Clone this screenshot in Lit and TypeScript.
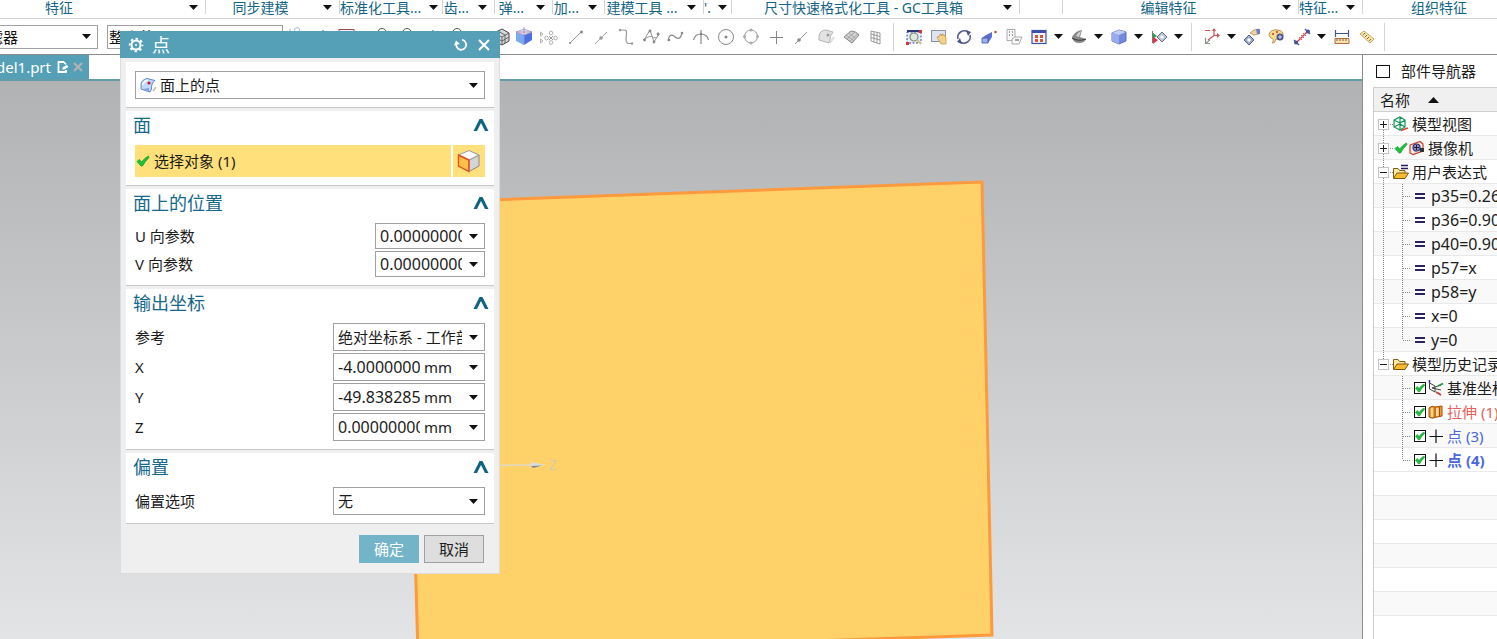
import { LitElement, html, css, svg, nothing } from "lit";
import { customElement } from "lit/decorators.js";

const FONT = css`"Noto Sans", "Noto Sans CJK SC", sans-serif`;

const caret = () => html`<svg class="caret" width="9" height="5" viewBox="0 0 9 5" aria-hidden="true"><path d="M0 0H9L4.5 5Z" fill="#111" /></svg>`;

/* 20 x 20 toolbar glyphs */
const G: Record<string, unknown> = {
  shape: svg`<circle cx="10" cy="3" r="2.5" fill="none" stroke="#a8c0d8"/><path d="M3 2V18M10 6V18M17 4V18" stroke="#9ab4cc"/>`,
  axis: svg`<path d="M4 16L11 3L16 16" fill="none" stroke="#5a9fc0"/>`,
  redbox: svg`<rect x="2" y="2.5" width="15" height="15" fill="#f6f6f6" stroke="#9a4a4a"/>`,
  knob: svg`<circle cx="10" cy="6" r="4.5" fill="none" stroke="#555"/><path d="M4 12h12" stroke="#555"/>`,
  greycube: svg`<path d="M2 6L10 2L17 6V14L10 18L2 14Z" fill="#d9d6de" stroke="#444"/><path d="M2 6L10 10L17 6M10 10V18M6 4L13 8V16M2 10L10 14L17 10" fill="none" stroke="#666"/>`,
  bluecube: svg`<path d="M2 5L10 8V18L2 14Z" fill="#7aaaf2"/><path d="M10 8L18 5V13L10 18Z" fill="#4d6fe0"/><path d="M2 5L10 2L18 5L10 8Z" fill="#dcecfb"/><path d="M2 5L10 2L18 5L10 8ZM10 8V18" fill="none" stroke="#8f9ad0" stroke-width=".8"/><path d="M10 0V9M2 5H18" stroke="#c77b9c" stroke-width=".8"/>`,
  pattern: svg`<g fill="none" stroke="#b0b0b0"><path d="M1.500 5V9L4 7ZM1.500 12V16L4 14Z"/><circle cx="12" cy="6" r="1.800"/><circle cx="12" cy="15.500" r="1.800"/><circle cx="7.500" cy="11" r="1.800"/><circle cx="16.500" cy="11" r="1.800"/></g><path d="M10 9l4 4M14 9l-4 4" stroke="#999"/>`,
  line: svg`<path d="M4 16L15 5" stroke="#999"/><circle cx="4" cy="16" r="1" fill="#888"/><circle cx="15.500" cy="5" r="1.500" fill="#888"/>`,
  linemid: svg`<path d="M4 17L16 5" stroke="#aaa"/><circle cx="10" cy="11" r="1.800" fill="#999"/>`,
  curve: svg`<path d="M4 3H8Q11 3 10.500 6L10 12Q10 16.500 13 16.500H17" fill="none" stroke="#999" stroke-width="1.200"/><circle cx="4" cy="3" r="1.200" fill="#999"/><circle cx="16" cy="16.500" r="1.200" fill="#999"/>`,
  zig: svg`<path d="M3 13L9 3L13 15L18 7M3 13Q9 7 13 11Q16 12 18 7" fill="none" stroke="#999"/><g fill="#888"><circle cx="3.500" cy="13" r="1.400"/><circle cx="9" cy="4" r="1.400"/><circle cx="13" cy="15" r="1.400"/><circle cx="17" cy="7" r="1.400"/></g>`,
  wave: svg`<path d="M2 14Q3 6 8 9Q14 15 16 6" fill="none" stroke="#888" stroke-width="1.200"/><circle cx="3" cy="13" r="1.300" fill="#888"/><circle cx="16" cy="6" r="1.300" fill="#888"/>`,
  arcplus: svg`<path d="M10 3V17M2.500 13Q4 7 10 7Q16 7 17.500 13" fill="none" stroke="#888" stroke-width="1.200"/><circle cx="10" cy="7" r="1.300" fill="#888"/>`,
  target: svg`<circle cx="10" cy="10" r="7.500" fill="none" stroke="#888"/><circle cx="10" cy="10" r="1.500" fill="#888"/>`,
  ring: svg`<circle cx="10" cy="9.500" r="6.500" fill="none" stroke="#999"/><g fill="#ababab"><circle cx="10" cy="3" r="1.500"/><circle cx="10" cy="16" r="1.500"/><circle cx="3.500" cy="9.500" r="1.500"/><circle cx="16.500" cy="9.500" r="1.500"/></g>`,
  plus: svg`<path d="M10.500 4V17M4 10.500H17" stroke="#888"/>`,
  linepick: svg`<path d="M4 17L16 5" stroke="#999"/><circle cx="8" cy="13" r="1.800" fill="#888"/>`,
  sheet: svg`<path d="M3 9Q4 3 10 3L17 5Q14 8 14 13L13 16L3 13Z" fill="#e2e2e2" stroke="#b4b4b4"/><circle cx="12" cy="8" r="1.500" fill="#999"/><path d="M14 16L18 10" stroke="#ddd" stroke-width="2"/>`,
  mesh: svg`<path d="M3 10L10 4Q15 4 18 8L11 16Z" fill="#d2d2d2" stroke="#888"/><path d="M5 8L13 14M8 6L15 12M6 12L14 5M9 14L17 7" stroke="#999" stroke-width=".8"/>`,
  grid: svg`<path d="M5 4L14 6V17L5 14ZM8 5V15M11 5.500V16M5 7L14 9.500M5 10.500L14 13" fill="none" stroke="#999"/>`,
  fit: svg`<path d="M3 5h14v11H3z" fill="#e9edf5" stroke="#3449a0" stroke-dasharray="2 1.500"/><path d="M3 4h14" stroke="#27387c" stroke-width="2"/><circle cx="10" cy="10" r="4" fill="#dce9dc" stroke="#808a80" stroke-width="1.200"/><path d="M13 13l4 4" stroke="#d8c080" stroke-width="2"/><path d="M2 15h3v3H2zM15 3h3v3h-3z" fill="#d33"/>`,
  pan: svg`<rect x="2.500" y="3.500" width="14" height="11" fill="#dfe4f1" stroke="#8c8fa8"/><path d="M8 10l3-1 0-2 1 0 1 2 0-2 1 0 1 2 1-1 1 3 0 6H12Z" fill="#f3d28e" stroke="#c29a50" stroke-width=".8"/>`,
  rotate: svg`<path d="M4 12A6.500 6.500 0 0 1 14 5M16 8A6.500 6.500 0 0 1 6 15" fill="none" stroke="#5a628c" stroke-width="1.600"/><path d="M12 3l5 2-3 4zM8 17l-5-2 3-4z" fill="#4c5480"/>`,
  extrude: svg`<path d="M3 11L7 8L13 5V10L9 16H3Z" fill="#5b6fd6"/><path d="M3 11H9V16H3Z" fill="#9fb2f0" stroke="#4052b0" stroke-width=".8"/><circle cx="16.500" cy="5" r="1.200" fill="#c33"/>`,
  sheets: svg`<g fill="#f8f8f8" stroke="#aaa"><path d="M3 2.500h8v11H3z"/><path d="M8 12l3-2h7l-3 7H8z"/></g><path d="M5 5h1M8 5h1M5 8h1M8 8h1M11 13h4" stroke="#888" stroke-width="1.500"/>`,
  layout: svg`<rect x="3" y="3.500" width="14" height="13" fill="#f4f4fb" stroke="#3c50a8" stroke-width="1.200"/><path d="M3 4.500h14" stroke="#3c50a8" stroke-width="3"/><path d="M6 8h3v3H6zM11 8h3v3h-3zM6 12h3v3H6zM11 12h3v3h-3z" fill="#d8553c"/>`,
  section: svg`<path d="M3 10Q6 4 13 3L11 10L17 12Q16 16 10 16Q4 16 3 10Z" fill="#8a8a8a"/><path d="M7 9Q8 6 12 4L10 10Z" fill="#d4d4d4"/><path d="M3 11Q9 15 17 12" fill="none" stroke="#333"/>`,
  solid: svg`<path d="M3 6L10 3L17 5V14L10 17L3 14Z" fill="#7488dc" stroke="#6070b4"/><path d="M3 6L10 8L17 5L10 3Z" fill="#c2cef6"/><path d="M3 6L10 8V17L3 14Z" fill="#9aacee"/>`,
  clip: svg`<path d="M3 5L8 9L4 12Z" fill="#2da44a"/><path d="M3.500 4V16" stroke="#777"/><path d="M4 10L9 13L4 17Z" fill="#d34"/><path d="M8 10L13 5L18 10L13 15Z" fill="#b9c2dc" stroke="#666f92"/><path d="M11 10L13 8L15 10L13 12Z" fill="#fff"/>`,
  csys: svg`<path d="M3 3.500h5M12 3V9M12 8.500H17M12 8.500L6 13" fill="none" stroke="#d65050" stroke-width="1.200"/><path d="M15 6l3 2.500-3 2.500zM10 4l2-3 2 3z" fill="#d65050"/><path d="M3.500 11V16.500H8M4 16L8 13" fill="none" stroke="#8a958a" stroke-width="1.200"/>`,
  hand1: svg`<path d="M2 13L7 8L12 13L7 18Z" fill="#9fabcf" stroke="#4c5a90"/><path d="M5 13L7 11L9 13L7 15Z" fill="#fff"/><path d="M8 6l4-3 5-1 0 5-5 1z" fill="#f0d3a0" stroke="#b38d58" stroke-width=".8"/><path d="M14 2h4v5h-3z" fill="#6f7fca"/>`,
  palette: svg`<path d="M2 7Q4 2 11 3Q17 4 16 9Q14 13 9 12Q8 17 5 16Q8 12 4 11Q2 10 2 7Z" fill="#f5dc8c" stroke="#b99a50"/><path d="M5 7h2M9 5h2" stroke="#d55" stroke-width="2"/><circle cx="13" cy="10" r="3.500" fill="#4a5596"/><path d="M11 10h4M13 8v4" stroke="#dde"/>`,
  measure: svg`<path d="M4 16L16 4" stroke="#c44" stroke-width="1.500"/><path d="M7 10l3 3M9 8l3 3M11 6l3 3" stroke="#d66"/><path d="M2 13l5 5M13 2l5 5" stroke="#44509a" stroke-width="1.300"/><circle cx="4" cy="15.500" r="2" fill="#44509a"/><circle cx="16" cy="4.500" r="2" fill="#44509a"/>`,
  ruler: svg`<path d="M3.500 3V10M16.500 3V10M4 6.500H16" stroke="#44509a" stroke-width="1.200"/><path d="M3 11.500h14v5H3z" fill="#f5e3a8" stroke="#b06a50"/><path d="M5 12v2M8 12v2M11 12v2M14 12v2" stroke="#8a5a40"/>`,
  tape: svg`<path d="M3 7L7 4L17 12L13 16Z" fill="#f5e3a8" stroke="#c8a868"/><path d="M6 8l2-2M8 10l2-2M10 12l2-2M12 14l2-2" stroke="#8a6a50"/>`,
};

const CHECK = svg`<path d="M2 8.500L4.500 6.500L6.500 9Q10 4.500 13.500 3L14 4.500Q10 8.500 7.500 13H6Z" fill="#1fc03a" stroke="#0f9a2c" stroke-width=".7"/>`;
const TICK = svg`<path d="M3.500 8L5.500 6.500L7 8.500Q9.500 5 12 4L12.500 5.500Q9.500 8.500 7.500 12H6.500Z" fill="#1fc03a" stroke="#0f9a2c" stroke-width=".6"/>`;

/* 16 x 16 tree glyphs */
const T: Record<string, unknown> = {
  views: svg`<path d="M1 4L7 1L12 4V11L7 14L1 11ZM1 4L7 7L12 4M7 7V14M1 11L7 8L12 11M7 1V8" fill="none" stroke="#12945a" stroke-width="1.200"/><path d="M8 14.500L15 12" stroke="#d9482e" stroke-width="1.800"/>`,
  check: CHECK,
  camera: svg`<path d="M1 5L11 1.500L14 4V11L4 14.500L1 13Z" fill="#f9e4e0" stroke="#c8402e" stroke-width="1.200"/><circle cx="7.500" cy="7.500" r="3.500" fill="#8c90d0" stroke="#2a2a70" stroke-width="1.200"/><path d="M5 7.500h5M7.500 5v5" stroke="#222"/><path d="M11 8v4h4V8" fill="#333"/>`,
  folderexpr: svg`<path d="M8 1.500h7M8 4.500h7" stroke="#241d63" stroke-width="1.500"/><path d="M.5 14V4.500H5L6.500 6.500H12V9" fill="#fbe9a0" stroke="#7a5a10"/><path d="M.5 14.500L4 9H15.500L12 14.500Z" fill="#fbb92c" stroke="#7a5a10"/>`,
  folder: svg`<path d="M.5 13V3.500H5L6.500 5.500H12V8" fill="#fbe9a0" stroke="#7a5a10"/><path d="M.5 13.500L4 8H15.500L12 13.500Z" fill="#fbb92c" stroke="#7a5a10"/>`,
  eq: svg`<path d="M3 6H13M3 10H13" stroke="#2c2260" stroke-width="2"/>`,
  datum: svg`<path d="M1.500 3V9L7 12V6ZM4 8L13 5M4 8L13 10" fill="none" stroke="#444"/><path d="M10 6L15 3.500" stroke="#1c9a40" stroke-width="1.800"/><path d="M8 12L13 15" stroke="#c33" stroke-width="1.800"/><path d="M1.500 0V3" stroke="#33b" stroke-width="1.500"/>`,
  extrusion: svg`<path d="M1 4Q4 1 7 3L14 2V12L7 13.500Q4 15 1 13Z" fill="#f79b2a" stroke="#a04c10"/><path d="M7 3V13M11.500 3V12" stroke="#a04c10"/><path d="M8 4h2.500v8H8zM3 4h2v9H3z" fill="#ffd9a0"/>`,
  point: svg`<path d="M8 1.500V15M1.500 8.500H15" stroke="#111" stroke-width="1.200"/>`,
};

const RIBBON: Array<[string, number, boolean]> = [
  ["特征", 269, true], ["同步建模", 134, true], ["标准化工具...", 103, true], ["齿...", 52, true],
  ["弹...", 58, true], ["加...", 52, true], ["建模工具 ...", 99, true], ["'.", 28, true],
  ["尺寸快速格式化工具 - GC工具箱", 288, true], ["", 43, false], ["编辑特征", 236, true],
  ["特征...", 64, true], ["组织特征", 152, false],
];

/* "v" is a drop-down arrow, "|" a separator, dashes are gaps */
const TOOLS = [
  "shape", "axis", "redbox", "-", "knob", "knob", "axis", "knob", "--", "greycube:s", "bluecube:s",
  "pattern:w", "line", "linemid", "curve", "zig", "wave", "arcplus", "target", "ring", "plus", "linepick",
  "sheet", "mesh", "grid", "|", "fit", "pan", "rotate", "extrude", "sheets", "layout", "v", "section", "v",
  "solid", "v", "clip", "v", "|", "csys", "v", "hand1", "palette", "measure", "v", "ruler", "tape", "|",
];

@customElement("nx-ribbon")
class NxRibbon extends LitElement {
  static styles = css`
    :host { display: block; overflow-x: clip; font: 14px/16px ${FONT}; background: #fff; }
    .labels { display: flex; height: 18px; margin-left: -63px; border-bottom: 1px solid #d4d4d4; }
    .group { flex: none; box-sizing: border-box; display: flex; height: 14px; border-right: 1px solid #d4d4d4; }
    .group:last-child { border: 0; }
    .name { flex: 1; text-align: center; color: #146585; white-space: nowrap; }
    .drop { flex: none; width: 24px; height: 14px; padding: 0; border: 0; background: none; }
    .caret { display: block; margin: 0 auto; }
    .tools { display: flex; align-items: center; height: 35px; border-bottom: 1px solid #8c8c8c; }
    .pick { flex: none; position: relative; display: flex; align-items: center; }
    select { appearance: none; box-sizing: border-box; height: 24px; border: 1px solid #a0a0a0; border-radius: 0;
      background: #fff; color: #111; font: 15px/20px ${FONT}; padding: 0 20px 0 4px; }
    .pick .caret { position: absolute; right: 7px; pointer-events: none; }
    .first { margin-left: -77px; }
    .first select { width: 175px; }
    .second { margin: 0 1px 0 9px; }
    .second select { width: 176px; padding-left: 1px; }
    .tool, .mini { flex: none; width: 25px; height: 24px; padding: 0; border: 0; background: none; display: grid; place-items: center; }
    .tool.s { width: 22px; }
    .tool.w { width: 28px; }
    .mini { width: 15px; }
    .sep { flex: none; width: 1px; height: 28px; margin: 0 7px 0 5px; background: #d4d4d4; }
    .gap { flex: none; width: 10px; }
    .biggap { flex: none; width: 22px; }
  `;
  tool(t: string) {
    if (t === "v") return html`<button class="mini" aria-label="更多">${caret()}</button>`;
    if (t === "|") return html`<span class="sep"></span>`;
    if (t === "-") return html`<span class="gap"></span>`;
    if (t === "--") return html`<span class="biggap"></span>`;
    const [name, size = ""] = t.split(":");
    return html`<button class="tool ${size}" aria-label=${name}><svg width="20" height="20" viewBox="0 0 20 20">${G[name]}</svg></button>`;
  }
  render() {
    return html`
      <div class="labels">
        ${RIBBON.map(([n, w, d]) => html`<div class="group" style="width:${w}px"><span class="name">${n}</span>${d ? html`<button class="drop" aria-label="展开">${caret()}</button>` : nothing}</div>`)}
      </div>
      <div class="tools">
        <span class="pick first"><select aria-label="过滤器"><option>无选择过滤器</option></select>${caret()}</span>
        <span class="pick second"><select aria-label="范围"><option>整个装配</option></select>${caret()}</span>
        ${TOOLS.map((t) => this.tool(t))}
      </div>`;
  }
}

@customElement("point-dialog")
class PointDialog extends LitElement {
  static styles = css`
    :host { display: block; box-sizing: border-box; background: #efefef; border: 1px solid #dcdcdc; border-top: 0; color: #1c1c1c; font: 15px/20px ${FONT}; }
    * { box-sizing: border-box; }
    header { display: flex; align-items: center; height: 27px; margin: 0 -1px; padding: 0 5px 0 8px; background: #559fb7; color: #fff; }
    h1 { flex: 1; margin: 0 0 0 8px; font-size: 18px; line-height: 24px; font-weight: 400; }
    header button { width: 23px; height: 22px; padding: 0; border: 0; background: none; display: grid; place-items: center; }
    .body { display: flex; flex-direction: column; gap: 3px; padding: 4px 5px 0; }
    section { padding: 0 9px 8px; background: #fff; border-bottom: 1px solid #c6c8ca; }
    section.type { padding-top: 9px; }
    .head { display: flex; align-items: center; justify-content: space-between; height: 34px; margin: 0 -4px 0 -2px; padding-bottom: 6px; }
    h2 { margin: 0; color: #14688a; font-size: 18px; line-height: 24px; font-weight: 400; }
    .head button { width: 16px; height: 16px; padding: 0; border: 0; background: none; display: grid; place-items: center; }
    .rows { display: flex; flex-direction: column; gap: 2px; }
    .row { display: flex; align-items: center; justify-content: space-between; }
    .combo { display: flex; align-items: center; width: 152px; height: 28px; padding-left: 4px; border: 1px solid #a0a0a0; background: #fff; }
    .combo.wide { width: 100%; }
    .combo.short { width: 110px; height: 26px; }
    .combo input, .combo select { flex: 1; min-width: 0; width: 0; height: 22px; padding: 0; border: 0; background: none; color: #1c1c1c; font: 15px/20px ${FONT}; }
    .combo input { font-size: 16px; }
    .combo select { appearance: none; overflow: hidden; text-overflow: clip; }
    .unit { width: 42px; padding-left: 4px; }
    .combo button { flex: none; width: 22px; height: 22px; padding: 0; border: 0; background: none; display: grid; place-items: center; }
    .glyph { flex: none; margin-right: 3px; }
    .pick { display: flex; gap: 2px; }
    .pick button { height: 32px; padding: 0; border: 0; background: #ffe07a; color: #1c1c1c; font: 15px/20px ${FONT}; }
    .target { flex: 1; display: flex; align-items: center; }
    .pick .face { width: 32px; display: grid; place-items: center; }
    footer { display: flex; justify-content: flex-end; gap: 5px; padding: 11px 15px 10px; }
    footer button { width: 60px; height: 28px; padding: 0; border: 1px solid #a0a0a0; background: #dedede; color: #1c1c1c; font: 15px/20px ${FONT}; }
    footer .ok { border-color: #73b4c9; background: #73b4c9; color: #fff; }
  `;
  head(t: string) {
    return html`<div class="head"><h2>${t}</h2><button aria-label="折叠${t}"><svg width="16" height="12" viewBox="0 0 16 12"><path d="M.5 12L6.500 0H9.500L15.500 12H12L8 4L4 12Z" fill="#0f6484"/></svg></button></div>`;
  }
  num(id: string, label: string, value: string, unit = "") {
    return html`<div class="row"><label for=${id}>${label}</label>
      <div class="combo ${unit ? "" : "short"}"><input id=${id} .value=${value} />${unit ? html`<span class="unit">${unit}</span>` : nothing}<button aria-label="${label}选项">${caret()}</button></div></div>`;
  }
  sel(id: string, label: string, value: string) {
    return html`<div class="row"><label for=${id}>${label}</label>
      <div class="combo"><select id=${id}><option>${value}</option></select><button tabindex="-1" aria-label="${label}列表">${caret()}</button></div></div>`;
  }
  render() {
    return html`
      <header>
        <svg width="16" height="16" viewBox="0 0 16 16"><circle cx="8" cy="8" r="4.500" fill="none" stroke="#fff" stroke-width="2"/><circle cx="8" cy="8" r="6.300" fill="none" stroke="#fff" stroke-width="2" stroke-dasharray="2.400 2.550" stroke-dashoffset="1.200"/><circle cx="8" cy="8" r="1" fill="#fff"/></svg>
        <h1>点</h1>
        <button aria-label="重置"><svg width="14" height="14" viewBox="0 0 14 14"><path d="M8 1.800A5 5 0 1 1 2.500 5" fill="none" stroke="#fff" stroke-width="1.800"/><path d="M0 7.500L2 2.500L6 6Z" fill="#fff"/></svg></button>
        <button aria-label="关闭"><svg width="12" height="12" viewBox="0 0 12 12"><path d="M1 1L11 11M11 1L1 11" stroke="#fff" stroke-width="2.200"/></svg></button>
      </header>
      <div class="body">
        <section class="type">
          <div class="combo wide">
            <svg class="glyph" width="17" height="17" viewBox="0 0 17 17"><path d="M1 8Q1 3 7 1.500L15 3.500Q11 6 11.500 12L10 15L1 12Z" fill="#c3d8f8" stroke="#5e86cf"/><path d="M2.500 8Q4 4 8 3" fill="none" stroke="#fff" stroke-width="1.500"/><path d="M3 12L9 14V11Z" fill="#7ea4e6"/><circle cx="9" cy="6" r="1.600" fill="#c01f2e"/><path d="M13 14L16 10" stroke="#c4c4cc" stroke-width="2"/></svg>
            <select aria-label="类型"><option>面上的点</option></select><button tabindex="-1" aria-label="类型列表">${caret()}</button>
          </div>
        </section>
        <section>
          ${this.head("面")}
          <div class="pick">
            <button class="target"><svg class="glyph" width="16" height="16" viewBox="0 0 16 16">${CHECK}</svg>选择对象 (1)</button>
            <button class="face" aria-label="面"><svg width="24" height="24" viewBox="0 0 24 24"><path d="M1.500 6L12 11V22.500L1.500 17Z" fill="#ffc04a" stroke="#e8501c" stroke-width="1.400"/><path d="M12 11L22 6V17L12 22.500Z" fill="#d4d4d8" stroke="#8a8a8e"/><path d="M1.500 6L12 1.500L22 6L12 11Z" fill="#fafafa" stroke="#9a9a9e"/><path d="M1.500 6L12 11V22" fill="none" stroke="#e8501c" stroke-width="1.400"/></svg></button>
          </div>
        </section>
        <section>${this.head("面上的位置")}
          <div class="rows">${this.num("u", "U 向参数", "0.000000000")}${this.num("v", "V 向参数", "0.000000000")}</div>
        </section>
        <section>${this.head("输出坐标")}
          <div class="rows">${this.sel("ref", "参考", "绝对坐标系 - 工作部件")}${this.num("x", "X", "-4.0000000", "mm")}${this.num("y", "Y", "-49.838285", "mm")}${this.num("z", "Z", "0.000000000", "mm")}</div>
        </section>
        <section>${this.head("偏置")}<div class="rows">${this.sel("off", "偏置选项", "无")}</div></section>
      </div>
      <footer><button class="ok">确定</button><button>取消</button></footer>`;
  }
}

type Row = { depth: number; icons: string[]; text: string; toggle?: string; last?: boolean; tone?: string; latin?: boolean };
const ROWS: Row[] = [
  { depth: 0, icons: ["views"], text: "模型视图", toggle: "+" },
  { depth: 0, icons: ["check", "camera"], text: "摄像机", toggle: "+" },
  { depth: 0, icons: ["folderexpr"], text: "用户表达式", toggle: "-" },
  ...["p35=0.26", "p36=0.90", "p40=0.90", "p57=x", "p58=y", "x=0", "y=0"].map((text, i) => ({ depth: 1, icons: ["eq"], text, last: i === 6, latin: true })),
  { depth: 0, icons: ["folder"], text: "模型历史记录", toggle: "-", last: true },
  { depth: 2, icons: ["box", "datum"], text: "基准坐标系 (0)" },
  { depth: 2, icons: ["box", "extrusion"], text: "拉伸 (1)", tone: "red" },
  { depth: 2, icons: ["box", "point"], text: "点 (3)", tone: "blue" },
  { depth: 2, icons: ["box", "point"], text: "点 (4)", tone: "blue bold", last: true },
];

@customElement("part-navigator")
class PartNavigator extends LitElement {
  static styles = css`
    :host { display: flex; flex-direction: column; min-height: 0; overflow: hidden; background: #fff; border-left: 1px solid #8c8c8c; color: #1c1c1c; font: 15px/20px ${FONT}; }
    header { display: flex; align-items: center; gap: 11px; height: 32px; padding-left: 13px; white-space: nowrap; }
    h2 { margin: 0; font-size: 15px; font-weight: 400; }
    .tree { flex: 1; min-height: 0; margin-left: 10px; border-left: 1px solid #ccc; border-top: 1px solid #ccc; overflow: hidden;
      background: repeating-linear-gradient(#fff 0 23px, #e9e9e9 23px 24px, #f9f9f9 24px 47px, #e9e9e9 47px 48px); }
    .col { display: flex; align-items: center; gap: 18px; height: 24px; padding-left: 6px; background: #f0f0f0; box-shadow: inset 0 -1px #d0d0d0; box-sizing: border-box; }
    ul { margin: 0; padding: 0; list-style: none; background: repeating-linear-gradient(#fff 0 23px, #e9e9e9 23px 24px, #f9f9f9 24px 47px, #e9e9e9 47px 48px); }
    li { display: flex; align-items: center; height: 24px; white-space: nowrap; }
    .guide, .icon { flex: none; display: block; }
    .toggle { flex: none; width: 19px; height: 24px; padding: 0; border: 0; background: none; }
    .box { flex: none; position: relative; width: 16px; height: 16px; }
    .box input { appearance: none; box-sizing: border-box; display: block; width: 12px; height: 12px; margin: 2px; border: 1px solid #111; background: #fff; }
    .box svg { position: absolute; inset: 0; pointer-events: none; }
    .text { margin-left: 3px; }
    .latin { font-size: 16px; }
    .red { color: #e8605c; }
    .blue { color: #4a68dc; }
    .bold { font-weight: 700; }
  `;
  dots(d: string) {
    return svg`<path d=${d} fill="none" stroke="#888" stroke-dasharray="1 1"/>`;
  }
  row(r: Row) {
    const id = "n" + ROWS.indexOf(r);
    const lead = r.toggle
      ? html`<button class="toggle" aria-label="展开${r.text}"><svg class="guide" width="19" height="24">${this.dots(r.last ? "M9.5 0V12M10 12.5H19" : r.text === "模型视图" ? "M9.5 12V24M10 12.5H19" : "M9.5 0V24M10 12.5H19")}<rect x="4.500" y="7.500" width="10" height="10" fill="#fff" stroke="#c4c4c4"/><path d=${r.toggle === "+" ? "M6 12.5H13M9.5 9V16" : "M6 12.5H13"} stroke="#222" stroke-width="1"/></svg></button>`
      : html`<svg class="guide" width="38" height="24">${r.depth === 1 ? this.dots("M9.5 0V24") : nothing}${this.dots(r.last ? "M28.5 0V12M29 12.5H37" : "M28.5 0V24M29 12.5H37")}</svg>`;
    return html`<li>${lead}${r.icons.map((i) => i === "box"
      ? html`<span class="box"><input type="checkbox" id=${id} .checked=${true} /><svg width="16" height="16" viewBox="0 0 16 16">${TICK}</svg></span>`
      : html`<svg class="icon" width="16" height="16" viewBox="0 0 16 16">${T[i]}</svg>`)}
      ${r.depth === 2 ? html`<label class="text ${r.tone ?? ""}" for=${id}>${r.text}</label>` : html`<span class="text ${r.latin ? "latin" : ""}">${r.text}</span>`}</li>`;
  }
  render() {
    return html`
      <header><svg width="14" height="13"><rect x=".5" y=".5" width="13" height="12" fill="#fff" stroke="#111"/></svg><h2>部件导航器</h2></header>
      <div class="tree">
        <div class="col"><span>名称</span><svg width="11" height="6"><path d="M0 6L5.500 0L11 6Z" fill="#111"/></svg></div>
        <ul>${ROWS.map((r) => this.row(r))}</ul>
      </div>`;
  }
}

@customElement("app-root")
class AppRoot extends LitElement {
  static styles = css`
    :host { display: flex; flex-direction: column; position: relative; height: 100vh; overflow: hidden; background: #fff; font: 15px/20px ${FONT}; }
    main { flex: 1; min-height: 0; display: grid; grid-template-columns: minmax(0, 1fr) 135px; }
    .work { display: flex; flex-direction: column; min-width: 0; }
    .tabs { display: flex; height: 24px; border-bottom: 2px solid #659aa8; }
    .tab { display: flex; align-items: center; justify-content: flex-end; box-sizing: border-box; width: 89px; padding-right: 6px; background: #559fb7; color: #fff; overflow: hidden; }
    .file { flex: none; color: #fff; text-decoration: none; }
    .tab svg { flex: none; margin-left: 6px; }
    .tab button { flex: none; display: flex; padding: 0; border: 0; background: none; }
    .tab button svg { margin-left: 4px; }
    .view { flex: 1; min-height: 0; background: linear-gradient(#b1b2b4, #e3e4e6); }
    .view svg { display: block; width: 100%; height: 100%; }
    .axis { font: 14px ${FONT}; }
    .dialog { position: absolute; left: 120px; top: 31px; width: 380px; }
  `;
  render() {
    return html`
      <nx-ribbon></nx-ribbon>
      <main>
        <div class="work">
          <div class="tabs"><div class="tab"><a class="file" href="#">_model1.prt</a>
            <svg width="12" height="12" viewBox="0 0 12 12"><path d="M7 1H1.500V11H9V9" fill="none" stroke="#fff" stroke-width="1.800"/><path d="M7 1L9 3.500" stroke="#fff" stroke-width="1.500"/><path d="M5 8.500L6 6L10 4L11.500 6L7.500 8.500Z" fill="#fff"/></svg>
            <button aria-label="关闭"><svg width="10" height="10" viewBox="0 0 10 10"><path d="M1 1L9 9M9 1L1 9" stroke="#b5b5b5" stroke-width="2"/></svg></button></div></div>
          <div class="view">
            <svg aria-label="模型视图">
              <path d="M405 122L982 101L992 554L418 573Z" fill="#ffd269" stroke="#fd9a3e" stroke-width="3"/>
              <path d="M379 385L532 384" stroke="#ded9c4" stroke-width="1.500"/>
              <path d="M531 381L546 384L531 387Z" fill="#dcdcdc"/><path d="M531 385L542 384.500L533 387Z" fill="#888"/>
              <text class="axis" x="549" y="389" fill="#d6cba6">Z</text>
            </svg>
          </div>
        </div>
        <part-navigator></part-navigator>
      </main>
      <point-dialog class="dialog"></point-dialog>`;
  }
}
